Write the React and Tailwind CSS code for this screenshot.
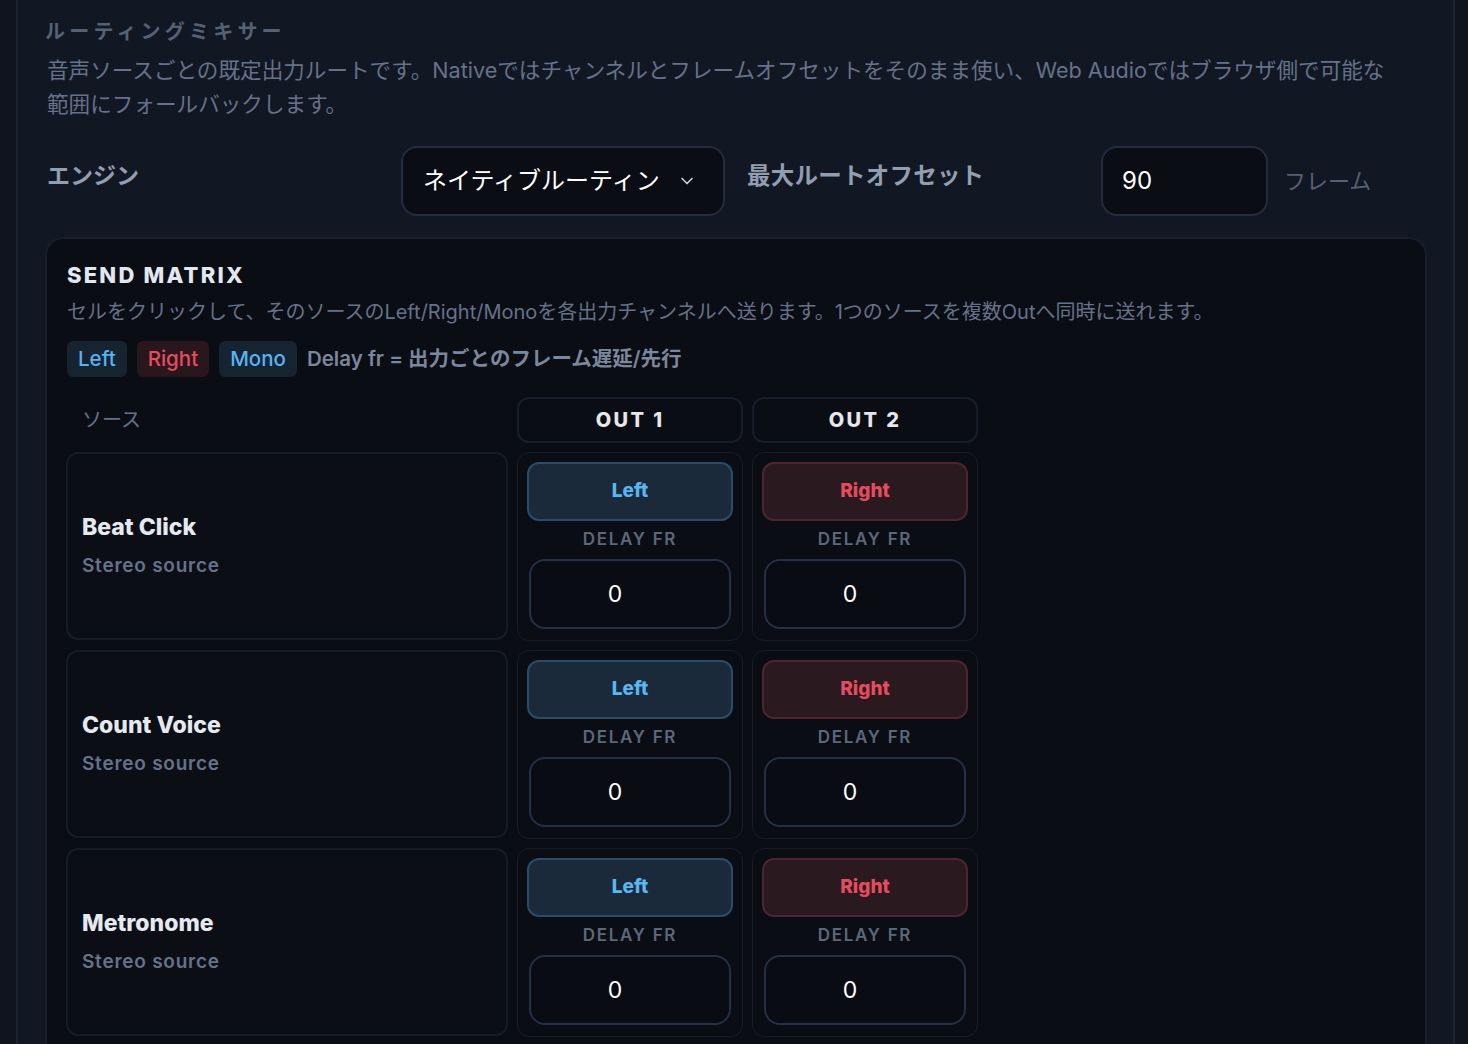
import { ChevronDown } from 'lucide-react';

const sources = [
  { id: 'beat', name: 'Beat Click', kind: 'Stereo source' },
  { id: 'count', name: 'Count Voice', kind: 'Stereo source' },
  { id: 'metro', name: 'Metronome', kind: 'Stereo source' },
];

const outputs = [
  { id: 1, label: 'OUT 1', channel: 'Left' },
  { id: 2, label: 'OUT 2', channel: 'Right' },
];

const SendCell = ({ channel }) => {
  const isLeft = channel === 'Left';
  return (
    <div className="flex flex-col rounded-[12px] border border-[#181e29] bg-[#0a0d14] p-[9px] pb-[11px]">
      <button
        className={
          isLeft
            ? 'h-[59px] w-full rounded-[12px] border-2 border-[#2a4c6a] bg-[#1b2a3a] text-[19px] font-extrabold text-[#5ab6f2]'
            : 'h-[59px] w-full rounded-[12px] border-2 border-[#50242e] bg-[#2b1920] text-[19px] font-extrabold text-[#e44d5e]'
        }
      >
        {channel}
      </button>
      <div className="flex h-[38px] items-center justify-center text-[17px] font-semibold tracking-[0.1em] text-[#5c677a]">
        DELAY FR
      </div>
      <div className="mx-[2px] flex h-[70px] items-center justify-center rounded-[16px] border-2 border-[#243044] bg-[#090c12] pr-[30px] text-[23px] text-white">
        0
      </div>
    </div>
  );
};

export default function App() {
  return (
    <div className="min-h-screen bg-[#0f141d] font-['Inter','Noto_Sans_CJK_JP',sans-serif]">
      <div className="ml-[16px] mr-[13px] min-h-[1044px] border-x-2 border-[#1c2433] bg-[#111723] pl-[27px] pr-[26px] pt-[18px]">
        {/* Header */}
        <h2 className="text-[20px] font-bold leading-[28px] tracking-[0.21em] text-[#566174]">
          ルーティングミキサー
        </h2>
        <p className="mt-[7px] max-w-[1350px] pl-[2px] text-[21.6px] leading-[34px] text-[#66728a]">
          音声ソースごとの既定出力ルートです。Nativeではチャンネルとフレームオフセットをそのまま使い、Web Audioではブラウザ側で可能な範囲にフォールバックします。
        </p>

        {/* Engine row */}
        <div className="mt-[25px] flex items-start pl-[2px]">
          <div className="w-[354px] pt-[14px] text-[23px] font-bold leading-[32px] text-[#939db0]">
            エンジン
          </div>
          <button className="flex h-[70px] w-[324px] items-center justify-between rounded-[16px] border-2 border-[#232d3f] bg-[#0a0d14] pl-[20px] pr-[26px] text-[24px] text-white">
            <span>ネイティブルーティン</span>
            <ChevronDown size={20} strokeWidth={2} className="text-[#c9d0da]" />
          </button>
          <div className="ml-[22px] w-[354px] pt-[14px] text-[23.5px] font-bold leading-[32px] tracking-[0.01em] text-[#939db0]">
            最大ルートオフセット
          </div>
          <div className="flex h-[70px] w-[167px] items-center rounded-[16px] border-2 border-[#232d3f] bg-[#0a0d14] pl-[19px] text-[24px] text-white">
            90
          </div>
          <div className="ml-[16px] flex h-[70px] items-center text-[22px] text-[#566174]">
            フレーム
          </div>
        </div>

        {/* Send matrix */}
        <div className="mt-[21px] rounded-[18px] border-2 border-[#181f2b] bg-[#0a0d14] px-[19px] pb-[20px] pt-[22px]">
          <h3 className="pl-[1px] text-[22px] font-extrabold leading-[28px] tracking-[0.1em] text-[#e2e8f0]">
            SEND MATRIX
          </h3>
          <p className="mt-[9px] pl-[1px] text-[20px] leading-[28px] text-[#66728a]">
            セルをクリックして、そのソースのLeft/Right/Monoを各出力チャンネルへ送ります。1つのソースを複数Outへ同時に送れます。
          </p>
          <div className="mt-[15px] flex items-center gap-[10px] pl-[1px]">
            <span className="flex h-[36px] items-center rounded-[6px] bg-[#162331] px-[11px] text-[20.5px] font-medium text-[#56b4f2]">
              Left
            </span>
            <span className="flex h-[36px] items-center rounded-[6px] bg-[#2a161d] px-[11px] text-[20.5px] font-medium text-[#e44d5e]">
              Right
            </span>
            <span className="flex h-[36px] items-center rounded-[6px] bg-[#162331] px-[11px] text-[20.5px] font-medium text-[#56b4f2]">
              Mono
            </span>
            <span className="text-[20.5px] font-semibold text-[#7b879b]">
              Delay fr = 出力ごとのフレーム遅延/先行
            </span>
          </div>

          <div className="mt-[20px] grid grid-cols-[442px_226px_226px] gap-[9px]">
            <div className="flex h-[46px] items-center pl-[16px] text-[20px] text-[#66728a]">ソース</div>
            {outputs.map((out) => (
              <div
                key={out.id}
                className="flex h-[46px] items-center justify-center rounded-[12px] border-2 border-[#181e29] text-[20px] font-extrabold tracking-[0.12em] text-[#e5e7eb]"
              >
                {out.label}
              </div>
            ))}

            {sources.map((src) => (
              <div key={src.id} className="contents">
                <div className="flex h-[188px] flex-col justify-center rounded-[12px] border-2 border-[#161c26] bg-[#0b0e15] pl-[14px]">
                  <div className="text-[23px] font-extrabold leading-[28px] text-[#e5e9f0]">{src.name}</div>
                  <div className="mt-[11px] text-[19px] font-semibold leading-[28px] tracking-[0.04em] text-[#66728a]">
                    {src.kind}
                  </div>
                </div>
                {outputs.map((out) => (
                  <SendCell key={out.id} channel={out.channel} />
                ))}
              </div>
            ))}
          </div>
        </div>
      </div>
    </div>
  );
}
